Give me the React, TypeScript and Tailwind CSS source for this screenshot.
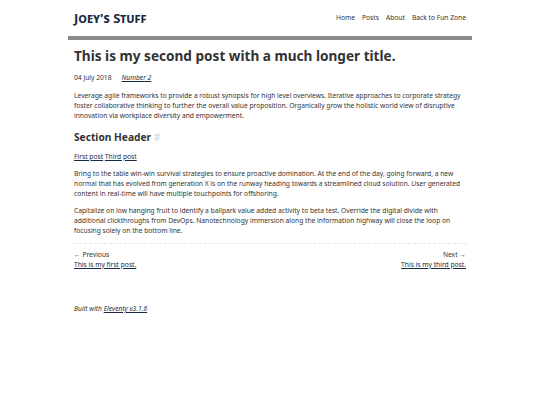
export default function App() {
  const font = { fontFamily: '"Noto Sans", "Open Sans", sans-serif' };
  return (
    <div style={font} className="w-full min-h-[405px] bg-white text-[#333]">
      <div className="w-[404px] mx-auto">
        <header className="flex items-center justify-between px-[6px] h-[36px] border-b-[4px] border-[#8c8c8c] box-content">
          <a className="text-[13px] font-bold text-[#1b2a44] [font-variant:small-caps] leading-none">Joey's Stuff</a>
          <nav className="flex gap-[7px] text-[6.7px] text-[#333]">
            <span>Home</span>
            <span>Posts</span>
            <span>About</span>
            <span>Back to Fun Zone</span>
          </nav>
        </header>
        <main className="px-[6px]">
          <h1 className="mt-[6px] text-[13.6px] font-bold leading-[20px] text-[#333]">This is my second post with a much longer title.</h1>
          <div className="mt-[7px] flex gap-[10px] text-[6.7px] leading-[10px] text-[#333]">
            <span>04 July 2018</span>
            <span className="italic underline text-[#1b2a44]">Number 2</span>
          </div>
          <p className="mt-[8px] text-[6.7px] leading-[10px]">Leverage agile frameworks to provide a robust synopsis for high level overviews. Iterative approaches to corporate strategy foster collaborative thinking to further the overall value proposition. Organically grow the holistic world view of disruptive innovation via workplace diversity and empowerment.</p>
          <h2 className="mt-[9px] text-[10.2px] font-bold leading-[14px]">Section Header <span className="text-[#ccc] font-normal">#</span></h2>
          <p className="mt-[8px] text-[6.7px] leading-[10px]"><span className="underline text-[#1b2a44]">First post</span> <span className="underline text-[#1b2a44]">Third post</span></p>
          <p className="mt-[7px] text-[6.7px] leading-[10px]">Bring to the table win-win survival strategies to ensure proactive domination. At the end of the day, going forward, a new normal that has evolved from generation X is on the runway heading towards a streamlined cloud solution. User generated content in real-time will have multiple touchpoints for offshoring.</p>
          <p className="mt-[7px] text-[6.7px] leading-[10px]">Capitalize on low hanging fruit to identify a ballpark value added activity to beta test. Override the digital divide with additional clickthroughs from DevOps. Nanotechnology immersion along the information highway will close the loop on focusing solely on the bottom line.</p>
          <div className="mt-[7px] border-t border-dashed border-[#e6e6e6]" />
          <div className="mt-[6px] flex justify-between text-[6.7px] leading-[10px]">
            <div>
              <div>← Previous</div>
              <div className="underline text-[#1b2a44]">This is my first post.</div>
            </div>
            <div className="text-right">
              <div>Next →</div>
              <div className="underline text-[#1b2a44]">This is my third post.</div>
            </div>
          </div>
        </main>
        <footer className="px-[6px] mt-[34px] text-[6.7px] leading-[10px] italic">
          Built with <span className="underline text-[#1b2a44]">Eleventy v3.1.6</span>
        </footer>
      </div>
    </div>
  );
}
